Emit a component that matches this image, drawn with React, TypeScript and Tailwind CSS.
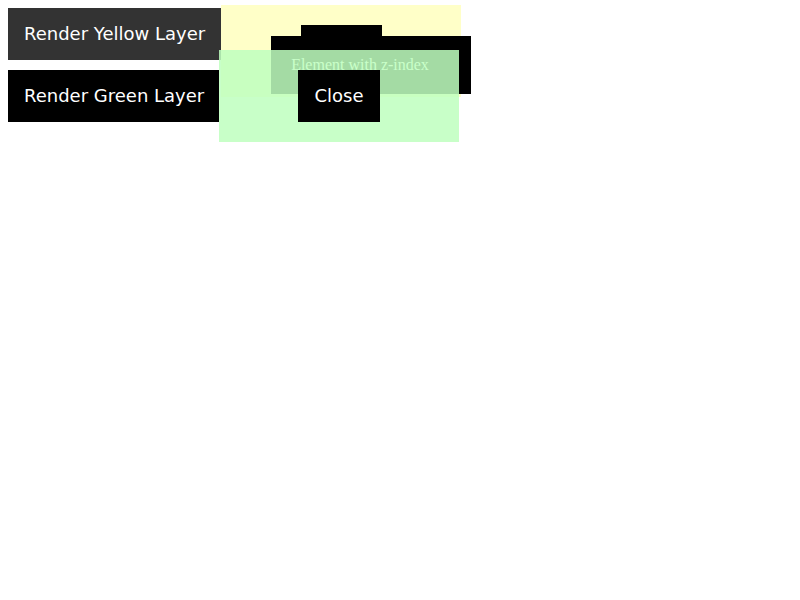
import type { ReactNode } from "react";

function Button({ children, className = "bg-black" }: { children: ReactNode; className?: string }) {
  return (
    <button
      type="button"
      className={`block whitespace-nowrap p-4 font-['DejaVu_Sans',sans-serif] text-lg leading-5 text-white ${className}`}
    >
      {children}
    </button>
  );
}

export default function App() {
  return (
    <main className="flex min-h-screen flex-col items-start gap-[10px] p-2 font-['Liberation_Serif',serif] text-base">
      <div className="relative">
        <Button className="bg-[#333333]">Render Yellow Layer</Button>
        <div className="absolute -top-[3px] left-full flex w-60 justify-center bg-[#ffffc8] p-5">
          <Button>Close</Button>
          <div className="absolute left-[50px] top-[31px] w-[200px] bg-black p-5 leading-[18px] text-white">
            Element with z-index
          </div>
        </div>
      </div>
      <div className="relative">
        <Button className="w-[211px] bg-black">Render Green Layer</Button>
        <div className="absolute left-full top-1/2 flex w-60 -translate-y-1/2 justify-center bg-[#bfffbf]/86 p-5">
          <Button>Close</Button>
        </div>
      </div>
    </main>
  );
}
